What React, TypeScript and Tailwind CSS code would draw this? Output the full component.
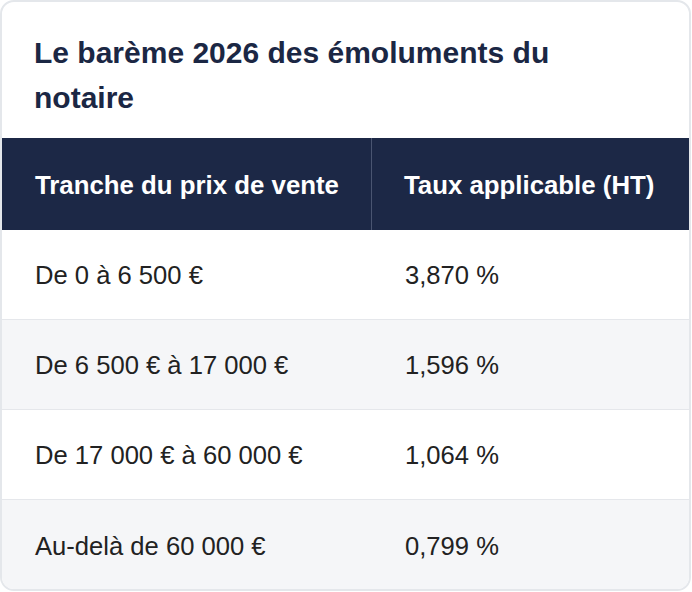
const rows = [
  { range: "De 0 à 6 500 €", rate: "3,870 %" },
  { range: "De 6 500 € à 17 000 €", rate: "1,596 %" },
  { range: "De 17 000 € à 60 000 €", rate: "1,064 %" },
  { range: "Au-delà de 60 000 €", rate: "0,799 %" },
];

export default function App() {
  return (
    <div className="bg-white min-h-screen" style={{ fontFamily: '"Liberation Sans", Arial, sans-serif' }}>
      <div className="w-[691px] h-[591px] rounded-[14px] border-2 border-[#e4e7eb] overflow-hidden bg-white">
        {/* Title */}
        <h2 className="px-[32px] pt-[28px] pb-[18px] text-[30px] leading-[45px] font-bold text-[#1b2744]">
          Le barème 2026 des émoluments du notaire
        </h2>

        {/* Table */}
        <div className="grid grid-cols-[370px_1fr] h-[92px] bg-[#1c2846] text-white font-bold text-[25.8px] whitespace-nowrap">
          <div className="flex items-center pt-[2px] pl-[33px] border-r border-[#4a5571]">Tranche du prix de vente</div>
          <div className="flex items-center pt-[2px] pl-[32px]">Taux applicable (HT)</div>
        </div>
        {rows.map((row, i) => (
          <div
            key={row.range}
            className={`grid grid-cols-[370px_1fr] h-[90px] text-[25.6px] text-[#222222] whitespace-nowrap ${
              i % 2 === 1 ? "bg-[#f5f6f8]" : "bg-white"
            } ${i < rows.length - 1 ? "border-b border-[#e5e7eb]" : ""}`}
          >
            <div className="flex items-center pt-[2px] pl-[33px]">{row.range}</div>
            <div className="flex items-center pt-[2px] pl-[33px]">{row.rate}</div>
          </div>
        ))}
      </div>
    </div>
  );
}
